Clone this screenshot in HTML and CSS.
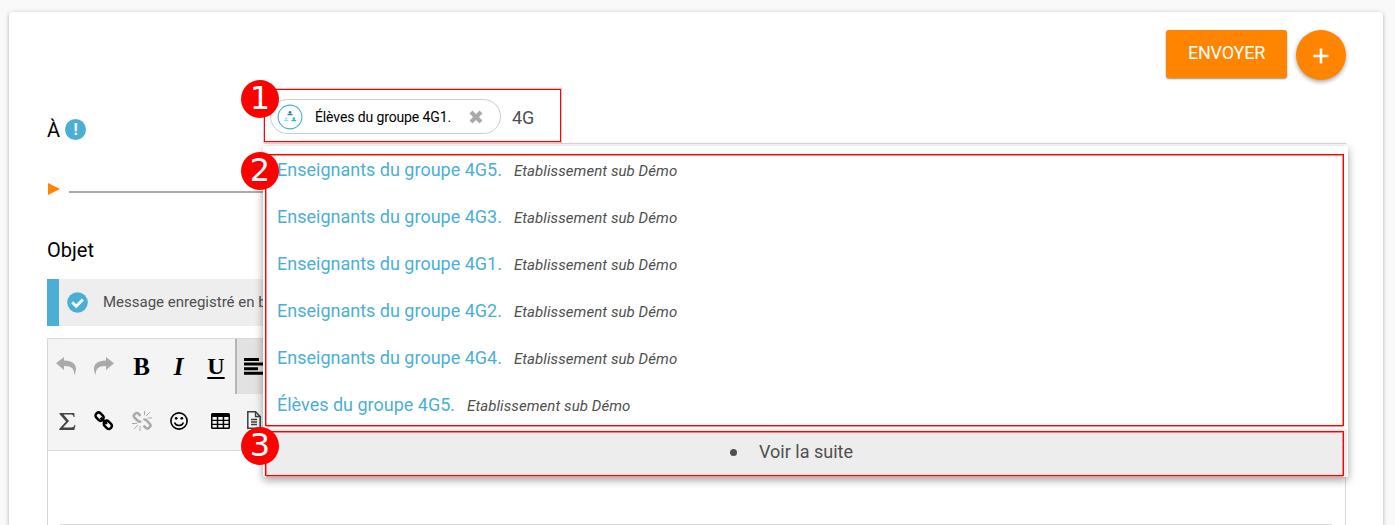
FILE: index.html
```html
<!DOCTYPE html>
<html lang="fr">
<head>
<meta charset="utf-8">
<title>Nouveau message</title>
<link rel="stylesheet" href="styles.css">
</head>
<body>
<main class="card">
  <div class="actions">
    <button class="send">ENVOYER</button>
    <button class="more" aria-label="Plus"><svg width="16" height="16" viewBox="0 0 16 16"><path d="M8 .5v15M.5 8h15" stroke="#fff" stroke-width="2.6"/></svg></button>
  </div>
  <div class="to-row">
    <div class="to-label">À <span class="info">!</span></div>
    <div class="recipients">
      <div class="chip">
        <svg class="group" width="26" height="26" viewBox="0 0 26 26">
          <circle cx="13" cy="13" r="11.9" fill="#fff" stroke="#4bafd5" stroke-width="1.1"/>
          <g fill="#2a7f93"><circle cx="13" cy="8.2" r="1.3"/><path d="M10.5 11.2v-1q2.500-1.400 5 0v1z"/></g>
          <g fill="#8fe0f7"><circle cx="9.300" cy="14.500" r="1.100"/><path d="M7 17.300v-1q2.300-1.400 4.500 0v1z"/></g>
          <g fill="#24b4e0"><circle cx="16.800" cy="14.500" r="1.200"/><path d="M14.400 17.300v-1q2.400-1.400 4.800 0v1z"/></g>
        </svg>
        <span class="chip-name">Élèves du groupe 4G1.</span>
        <svg class="remove" width="14" height="14" viewBox="0 0 14 14"><path d="M2 2l10 10M12 2L2 12" stroke="#aaa" stroke-width="4.2"/></svg>
      </div>
      <span class="query">4G</span>
    </div>
  </div>
  <div class="expand"><svg width="13" height="12" viewBox="0 0 13 12"><path d="M1 0l12 6L1 12z" fill="#ff8500"/></svg><div class="rule"></div></div>
  <div class="subject">Objet</div>
  <div class="notice">
    <svg width="21" height="21" viewBox="0 0 21 21"><circle cx="10.5" cy="10.5" r="10.3" fill="#4bafd5"/><path d="M5.200 10.200l4 4 6.700-6.700" fill="none" stroke="#fff" stroke-width="2.800"/></svg>
    <span>Message enregistré en b</span>
  </div>
  <section class="editor">
    <div class="toolbar">
      <div class="tools first">
        <svg class="undo" width="21" height="18" viewBox="0 0 21 18"><path d="M0 6.2L8 0v3.6C16 3.5 20.5 7 20 13q-.4 3-1.8 5c.3-6-2.7-9.2-10.2-9v4z" fill="#aaa"/></svg>
        <svg class="redo" width="21" height="18" viewBox="0 0 21 18"><path d="M21 6.2L13 0v3.6C5 3.5.5 7 1 13q.4 3 1.8 5C2.500 12 5.500 8.800 13 9v4z" fill="#aaa"/></svg>
        <b class="letter">B</b><b class="letter italic">I</b><b class="letter under">U</b>
        <div class="align"><svg width="20" height="17" viewBox="0 0 20 17"><path d="M0 1.500h15M0 6h19M0 10.700h14M0 15.300h20" stroke="#000" stroke-width="3"/></svg></div>
      </div>
      <div class="tools second">
        <svg class="sigma" width="17" height="17" viewBox="0 0 17 17"><path d="M.5 0h14.700l.5 4h-1c-.4-2-1.200-2.500-3-2.500H4.500L10 8l-6 6.500h8c2 0 2.800-.7 3.500-2.500h1L15.300 17H.2v-1L7 8.500.5 1z" fill="#444"/></svg>
        <svg class="link" width="20" height="20" viewBox="0 0 20 20"><g fill="none" stroke="#000" stroke-width="2.500"><rect x="-4.400" y="-3" width="8.800" height="6" rx="2.800" transform="translate(5.600 5.600) rotate(45)"/><rect x="-4.400" y="-3" width="8.800" height="6" rx="2.800" transform="translate(13.800 13.800) rotate(45)"/><path d="M6.600 6.600l6.300 6.300"/></g></svg>
        <svg class="unlink" width="20" height="20" viewBox="0 0 20 20"><g fill="none" stroke="#aaa" stroke-width="2.500"><path d="M8.500 4.800L6.400 2.700Q4.800 1.100 3.200 2.700L2.400 3.500Q.9 5.100 2.500 6.700L6 10Q7.500 11.300 9 10M11.500 9q1.600-1 3 .4l3.300 3.400q1.500 1.600 0 3.100l-1 1q-1.500 1.500-3 0l-2.300-2.300"/><path d="M12.500 0v4M14 5l4-4M15.500 7H20M0 12.500h5M6 14l-4 4M8 15v5" stroke-width="1"/></g></svg>
        <svg class="smile" width="18" height="18" viewBox="0 0 18 18"><circle cx="9" cy="9" r="8.100" fill="none" stroke="#000" stroke-width="1.600"/><circle cx="6.200" cy="6.300" r="1.350"/><circle cx="11.800" cy="6.300" r="1.350"/><path d="M4.600 10.500q1 3 4.400 3t4.400-3" fill="none" stroke="#000" stroke-width="1.500"/></svg>
        <svg class="grid" width="19" height="16" viewBox="0 0 19 16"><path fill-rule="evenodd" d="M1.500 0h16Q19 0 19 1.500v13q0 1.500-1.500 1.500h-16Q0 16 0 14.500v-13Q0 0 1.500 0zM1.500 4v2.700h4.300V4zm5.800 0v2.700h4.400V4zm5.900 0v2.700h4.300V4zM1.500 8v2.700h4.300V8zm5.800 0v2.700h4.400V8zm5.900 0v2.700h4.300V8zM1.500 12v2.500h4.300V12zm5.800 0v2.500h4.400V12zm5.900 0v2.500h4.300V12z"/></svg>
        <svg class="doc" width="14" height="18" viewBox="0 0 14 18"><path d="M.8.8h7.700l4.700 4.700v11.700H.8z" fill="none" stroke="#3c3f40" stroke-width="1.500"/><path d="M8.500.8v4.700h4.700M4 8.500h6M4 11h6M4 13.500h6" fill="none" stroke="#3c3f40" stroke-width="1.300"/></svg>
      </div>
    </div>
    <div class="editable"><div class="paper"></div></div>
  </section>
</main>

<div class="suggestions">
  <div class="option"><span class="name">Enseignants du groupe 4G5.</span><i>Etablissement sub Démo</i></div>
  <div class="option"><span class="name">Enseignants du groupe 4G3.</span><i>Etablissement sub Démo</i></div>
  <div class="option"><span class="name">Enseignants du groupe 4G1.</span><i>Etablissement sub Démo</i></div>
  <div class="option"><span class="name">Enseignants du groupe 4G2.</span><i>Etablissement sub Démo</i></div>
  <div class="option"><span class="name">Enseignants du groupe 4G4.</span><i>Etablissement sub Démo</i></div>
  <div class="option"><span class="name">Élèves du groupe 4G5.</span><i>Etablissement sub Démo</i></div>
  <div class="see-more"><span class="dot"></span><span>Voir la suite</span></div>
</div>

<div class="frame frame-1"></div>
<div class="frame frame-2"></div>
<div class="frame frame-3"></div>
<div class="step step-1">1</div>
<div class="step step-2">2</div>
<div class="step step-3">3</div>
</body>
</html>
```
FILE: styles.css
```css
* { box-sizing: border-box; }
html, body { height: 100%; }
body {
  margin: 0;
  padding: 12px 12px 0 9px;
  overflow: hidden;
  position: relative;
  background: #f9f9f9;
  font-family: Roboto, "Liberation Sans", sans-serif;
  color: #4f4f4f;
}
svg { display: block; flex: none; }
.card {
  height: 513px;
  padding: 18px 37px 0 38px;
  background: #fff;
  border-radius: 3px 3px 0 0;
  box-shadow: 0 1px 4px rgba(0, 0, 0, .3);
}
.actions { display: flex; justify-content: flex-end; gap: 9px; height: 69px; }
.send, .more { border: 0; background: #ff8500; color: #fff; font-family: inherit; }
.send {
  width: 121px;
  height: 48px;
  padding: 0 0 3px;
  border-radius: 3px;
  font-size: 18px;
  letter-spacing: -.2px;
  box-shadow: 0 1px 2px rgba(0, 0, 0, .45);
}
.more {
  display: flex;
  align-items: center;
  justify-content: center;
  width: 50px;
  height: 50px;
  padding: 2px 0 0;
  border-radius: 50%;
  box-shadow: 0 2px 4px rgba(0, 0, 0, .35);
}
.to-row { display: flex; height: 45px; }
.to-label {
  display: flex;
  align-items: center;
  gap: 5px;
  width: 217px;
  padding-top: 16px;
  font-size: 20px;
  color: #000;
}
.info {
  width: 21px;
  height: 21px;
  border-radius: 50%;
  background: #4bafd5;
  color: #fff;
  font-size: 16px;
  font-weight: 700;
  line-height: 21px;
  text-align: center;
}
.recipients {
  display: flex;
  flex: 1;
  align-items: flex-start;
  gap: 11px;
  padding-left: 6px;
  border-bottom: 1px solid #d9d9d9;
}
.chip {
  display: flex;
  align-items: center;
  width: 231px;
  height: 35px;
  padding-left: 6px;
  border: 1px solid #ccc;
  border-radius: 18px;
}
.chip-name { width: 166px; padding-left: 12px; font-size: 14px; letter-spacing: -.12px; color: #000; white-space: nowrap; }
.query { font-size: 18px; line-height: 37px; }
.expand { display: flex; gap: 8px; margin-top: 39px; height: 54px; }
.rule { width: 300px; height: 2px; margin-left: 1px; margin-top: 8px; background: #aaa; }
.subject { height: 42px; font-size: 20px; line-height: 26px; color: #000; }
.notice {
  display: flex;
  align-items: center;
  gap: 15px;
  height: 47px;
  padding-left: 8px;
  border-left: 12px solid #4bafd5;
  background: #eee;
  font-size: 15px;
}
.notice span { padding-bottom: 2px; }
.editor { height: 187px; margin-top: 12px; border: 1px solid #d9d9d9; border-bottom: 0; }
.toolbar { height: 112px; background: #f4f4f4; border-bottom: 1px solid #d9d9d9; }
.tools { display: flex; align-items: center; height: 54px; }
.first { padding-left: 8px; }
.undo { margin-right: 16px; }
.letter {
  width: 37px;
  padding-top: 2px;
  font: 700 25px "Liberation Serif", serif;
  color: #000;
  text-align: center;
}
.redo { margin-right: 9px; }
.italic { font-style: italic; }
.under {
  width: 38px;
  padding-top: 0;
  font-size: 24px;
  text-decoration: underline;
  text-decoration-thickness: 2px;
  text-underline-offset: 3px;
}
.align {
  display: flex;
  align-items: center;
  width: 60px;
  height: 55px;
  padding-left: 7px;
  background: #e2e2e2;
  border-left: 2px solid #b5b5b5;
}
.second { height: 56px; padding-left: 11px; }
.link { margin-left: 18px; }
.unlink { margin-left: 18px; }
.smile { margin-left: 18px; }
.grid { margin-left: 23px; }
.doc { margin: 0 0 2px 17px; }
.editable { height: 74px; padding: 73px 13px 0 12px; }
.paper { height: 1px; background: #d9d9d9; }

/* Autocomplete panel over the form */
.suggestions {
  position: absolute;
  left: 263px;
  top: 146px;
  width: 1085px;
  height: 331px;
  border: 1px solid #fff;
  border-top: 0;
  border-radius: 2px;
  background: #fff;
  box-shadow: 0 3px 9px rgba(0, 0, 0, .38);
}
.option { display: flex; align-items: center; gap: 12px; height: 47px; padding-left: 13px; font-size: 18px; }
.name { color: #4bafd5; }
.option i { padding-top: 3px; font-size: 15px; letter-spacing: .08px; }
.see-more {
  display: flex;
  align-items: center;
  justify-content: center;
  gap: 22px;
  height: 47px;
  margin-top: 1px;
  padding: 0 28px 2px 0;
  background: #ededed;
  font-size: 18px;
}
.dot { width: 7px; height: 7px; margin-top: 2px; border-radius: 50%; background: #4f4f4f; }

/* Numbered callouts over the interface */
.frame { position: absolute; border: 1px solid #f00; }
.frame::before { content: ""; display: block; height: 100%; border: 1px solid rgba(255, 0, 0, .45); }
.frame-1 { left: 264px; top: 89px; width: 297px; height: 53px; }
.frame-1::before { border-width: 0; }
.frame-1 { box-shadow: 0 0 0 1px rgba(255, 0, 0, .25); }
.frame-2 { left: 265px; top: 154px; width: 1079px; height: 272px; }
.frame-3 { left: 265px; top: 431px; width: 1079px; height: 45px; }
.step {
  position: absolute;
  left: 241px;
  width: 38px;
  height: 38px;
  border-radius: 50%;
  background: #f00;
  color: #fff;
  font: 32px/36px "DejaVu Sans", sans-serif;
  text-align: center;
}
.step-1 { top: 80px; }
.step-2 { top: 152px; }
.step-3 { top: 427px; }
```
